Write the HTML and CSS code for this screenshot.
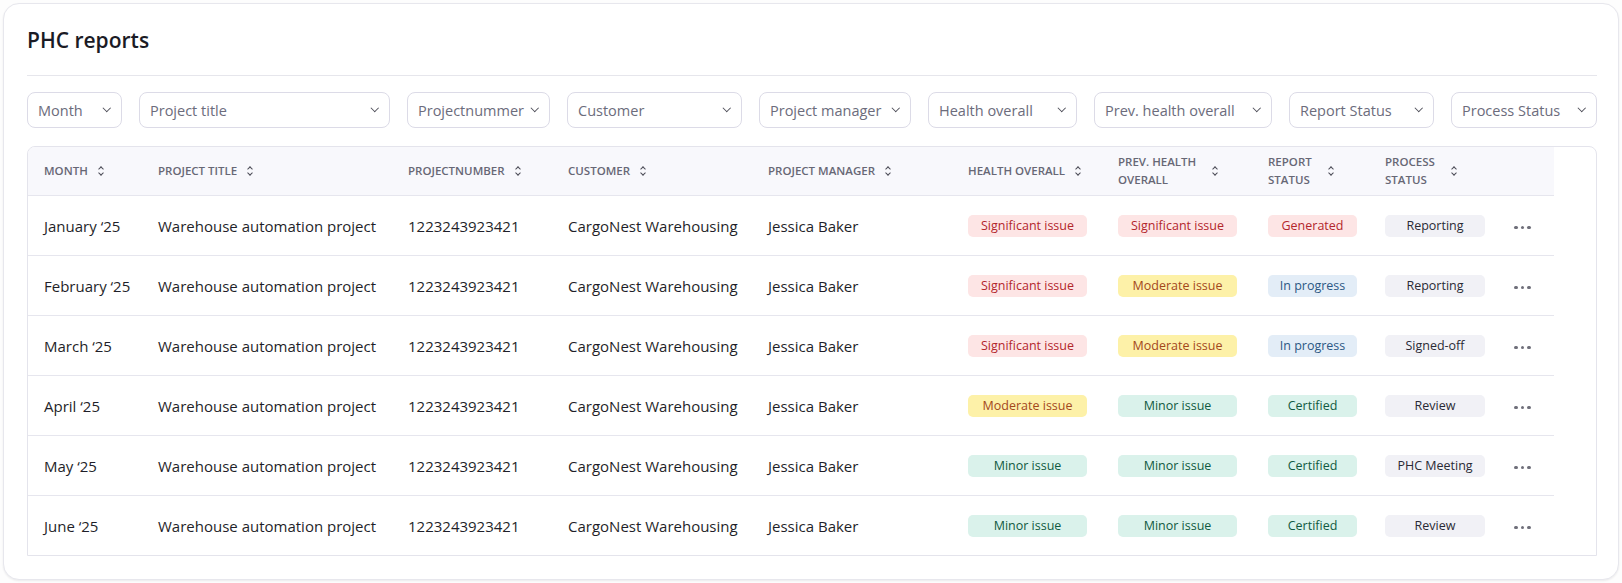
FILE: index.html
```html
<!DOCTYPE html>
<html lang="en">
<head>
    <meta charset="UTF-8">
    <title>PHC reports</title>
    <link rel="stylesheet" href="styles.css">
</head>
<body>
    <div class="card">
        <h1 class="card-title">PHC reports</h1>

        <div class="filters">
            <div class="filter">Month <span class="chevron"></span></div>
            <div class="filter">Project title <span class="chevron"></span></div>
            <div class="filter">Projectnummer <span class="chevron"></span></div>
            <div class="filter">Customer <span class="chevron"></span></div>
            <div class="filter">Project manager <span class="chevron"></span></div>
            <div class="filter">Health overall <span class="chevron"></span></div>
            <div class="filter">Prev. health overall <span class="chevron"></span></div>
            <div class="filter">Report Status <span class="chevron"></span></div>
            <div class="filter">Process Status <span class="chevron"></span></div>
        </div>

        <div class="table-wrap">
            <table class="reports">
                <colgroup>
                    <col style="width:114px">
                    <col style="width:250px">
                    <col style="width:160px">
                    <col style="width:200px">
                    <col style="width:200px">
                    <col style="width:150px">
                    <col style="width:150px">
                    <col style="width:117px">
                    <col style="width:132px">
                    <col style="width:53px">
                </colgroup>
                <thead>
                    <tr>
                        <th><span class="th">Month <span class="sort"></span></span></th>
                        <th><span class="th">Project title <span class="sort"></span></span></th>
                        <th><span class="th">Projectnumber <span class="sort"></span></span></th>
                        <th><span class="th">Customer <span class="sort"></span></span></th>
                        <th><span class="th">Project manager <span class="sort"></span></span></th>
                        <th><span class="th">Health overall <span class="sort"></span></span></th>
                        <th><span class="th th-wrap"><span>Prev. health<br>overall</span> <span class="sort"></span></span></th>
                        <th><span class="th th-wrap"><span>Report<br>status</span> <span class="sort"></span></span></th>
                        <th><span class="th th-wrap"><span>Process<br>status</span> <span class="sort"></span></span></th>
                        <th></th>
                    </tr>
                </thead>
                <tbody id="rows"></tbody>
            </table>
        </div>
    </div>

    <script>
        var rows = [
            ['January \u201825', 'sig', 'sig', ['gen', 'Generated'], 'Reporting'],
            ['February \u201825', 'sig', 'mod', ['prog', 'In progress'], 'Reporting'],
            ['March \u201825', 'sig', 'mod', ['prog', 'In progress'], 'Signed-off'],
            ['April \u201825', 'mod', 'min', ['cert', 'Certified'], 'Review'],
            ['May \u201825', 'min', 'min', ['cert', 'Certified'], 'PHC Meeting'],
            ['June \u201825', 'min', 'min', ['cert', 'Certified'], 'Review']
        ];
        var health = {
            sig: 'Significant issue',
            mod: 'Moderate issue',
            min: 'Minor issue'
        };

        var html = '';
        rows.forEach(function(r) {
            html += `
                <tr>
                    <td>${r[0]}</td>
                    <td>Warehouse automation project</td>
                    <td>1223243923421</td>
                    <td>CargoNest Warehousing</td>
                    <td>Jessica Baker</td>
                    <td><span class="badge badge-health badge-${r[1]}">${health[r[1]]}</span></td>
                    <td><span class="badge badge-health badge-${r[2]}">${health[r[2]]}</span></td>
                    <td><span class="badge badge-report badge-${r[3][0]}">${r[3][1]}</span></td>
                    <td><span class="badge badge-process">${r[4]}</span></td>
                    <td class="actions"><span class="dots"><i></i><i></i><i></i></span></td>
                </tr>`;
        });
        document.getElementById('rows').innerHTML = html;
    </script>
</body>
</html>
```

FILE: styles.css
```css
body {
    font-family: "Open Sans", sans-serif;
    margin: 0;
    padding: 3px;
    background-color: #fdfdfd;
    color: #1f1f29;
}
.card {
    width: 1570px;
    padding: 0 21px 23px 23px;
    background-color: #fff;
    border: 1px solid #e7e7ed;
    border-radius: 16px;
    box-shadow: 0 1px 2px rgba(20, 20, 40, 0.08);
}
.card-title {
    margin: 0;
    padding: 22px 0 21px;
    font-size: 21px;
    line-height: 28px;
    font-weight: 600;
    color: #1b1b25;
    border-bottom: 1px solid #e6e6ec;
}
.filters {
    display: grid;
    grid-template-columns: 95fr 251fr 143fr 175fr 152fr 149fr 178fr 145fr 146fr;
    gap: 17px;
    margin-top: 16px;
}
.filter {
    display: flex;
    align-items: center;
    justify-content: space-between;
    height: 34px;
    padding: 0 12px 0 10px;
    border: 1px solid #dcdbe7;
    border-radius: 8px;
    font-size: 14.5px;
    color: #6c6c7c;
    white-space: nowrap;
    overflow: hidden;
}
.chevron {
    width: 4.5px;
    height: 4.5px;
    margin-top: -4px;
    margin-left: 6px;
    flex-shrink: 0;
    border-right: 1.4px solid #4a4a55;
    border-bottom: 1.4px solid #4a4a55;
    transform: rotate(45deg);
}
.table-wrap {
    margin-top: 18px;
    border: 1px solid #e4e4ec;
    border-radius: 8px 8px 0 0;
    overflow: hidden;
}
.reports {
    width: 1526px;
    table-layout: fixed;
    border-collapse: collapse;
}
.reports th {
    height: 48px;
    padding: 0 16px;
    background-color: #f8f8fc;
    border-bottom: 1px solid #e6e6ee;
    text-align: left;
    font-size: 11.5px;
    font-weight: 600;
    line-height: 18px;
    text-transform: uppercase;
    color: #676775;
}
.th {
    display: inline-flex;
    align-items: center;
    gap: 10px;
    white-space: nowrap;
}
.th-wrap > span:first-child {
    padding-right: 6px;
}
.sort {
    position: relative;
    width: 6px;
    height: 10px;
    flex-shrink: 0;
}
.sort::before,
.sort::after {
    content: "";
    position: absolute;
    left: 1px;
    width: 3px;
    height: 3px;
    border-left: 1.4px solid #4a4a55;
    border-top: 1.4px solid #4a4a55;
}
.sort::before {
    top: 1px;
    transform: rotate(45deg);
}
.sort::after {
    bottom: 1px;
    transform: rotate(-135deg);
}
.reports td {
    height: 59px;
    padding: 0 16px;
    border-bottom: 1px solid #e6e6ee;
    font-size: 15px;
    white-space: nowrap;
}
.reports tbody tr:last-child td {
    border-bottom: none;
}
.badge {
    display: inline-block;
    height: 22px;
    line-height: 22px;
    border-radius: 5px;
    text-align: center;
    font-size: 12.5px;
}
.badge-health {
    width: 119px;
}
.badge-report {
    width: 89px;
}
.badge-process {
    width: 100px;
    background-color: #f1f1f6;
    color: #2a2a35;
}
.badge-sig,
.badge-gen {
    background-color: #fde5e5;
    color: #b3262c;
}
.badge-mod {
    background-color: #fdf1a8;
    color: #a3481c;
}
.badge-min,
.badge-cert {
    background-color: #daf2eb;
    color: #115a42;
}
.badge-prog {
    background-color: #e3edf7;
    color: #2c5884;
}
.actions {
    text-align: center;
}
.dots {
    display: inline-flex;
    gap: 3px;
    margin-left: -10px;
    vertical-align: middle;
}
.dots i {
    width: 3.5px;
    height: 3.5px;
    border-radius: 50%;
    background-color: #6f6f7a;
}
```
